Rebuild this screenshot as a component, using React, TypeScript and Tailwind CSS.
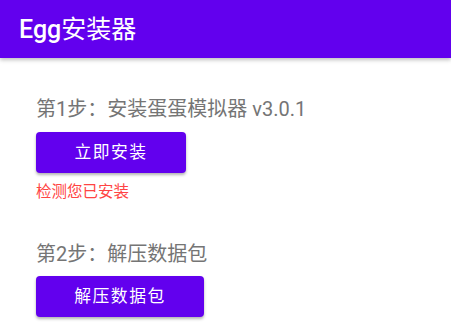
import React from "react";

const font = { fontFamily: 'Roboto, "Noto Sans CJK SC", sans-serif' };

export default function App() {
  return (
    <div className="w-[451px] h-[322px] bg-white overflow-hidden" style={font}>
      <div className="h-[58px] bg-[#6200ee] flex items-center pl-[19px] shadow-[0_2px_4px_rgba(0,0,0,0.25)] relative z-10">
        <span className="text-white text-[25px] leading-none">
          <span className="font-medium">Egg</span>
          <span className="font-normal">安装器</span>
        </span>
      </div>
      <div className="pl-[36px] pt-[39px] flex flex-col items-start">
        <div className="text-[20px] leading-[24px] text-[#757575]">第1步：安装蛋蛋模拟器 v3.0.1</div>
        <button className="mt-[11px] w-[150px] h-[41px] bg-[#6200ee] rounded-[4px] text-white text-[16.8px] tracking-[1.5px] shadow-[0_2px_3px_rgba(0,0,0,0.3)] flex items-center justify-center">
          立即安装
        </button>
        <div className="mt-[10px] text-[15.5px] leading-[18px] text-[#ff4444]">检测您已安装</div>
        <div className="mt-[41px] text-[20px] leading-[24px] text-[#757575]">第2步：解压数据包</div>
        <button className="mt-[10px] w-[168px] h-[41px] bg-[#6200ee] rounded-[4px] text-white text-[16.8px] tracking-[1.5px] shadow-[0_2px_3px_rgba(0,0,0,0.3)] flex items-center justify-center">
          解压数据包
        </button>
      </div>
    </div>
  );
}
